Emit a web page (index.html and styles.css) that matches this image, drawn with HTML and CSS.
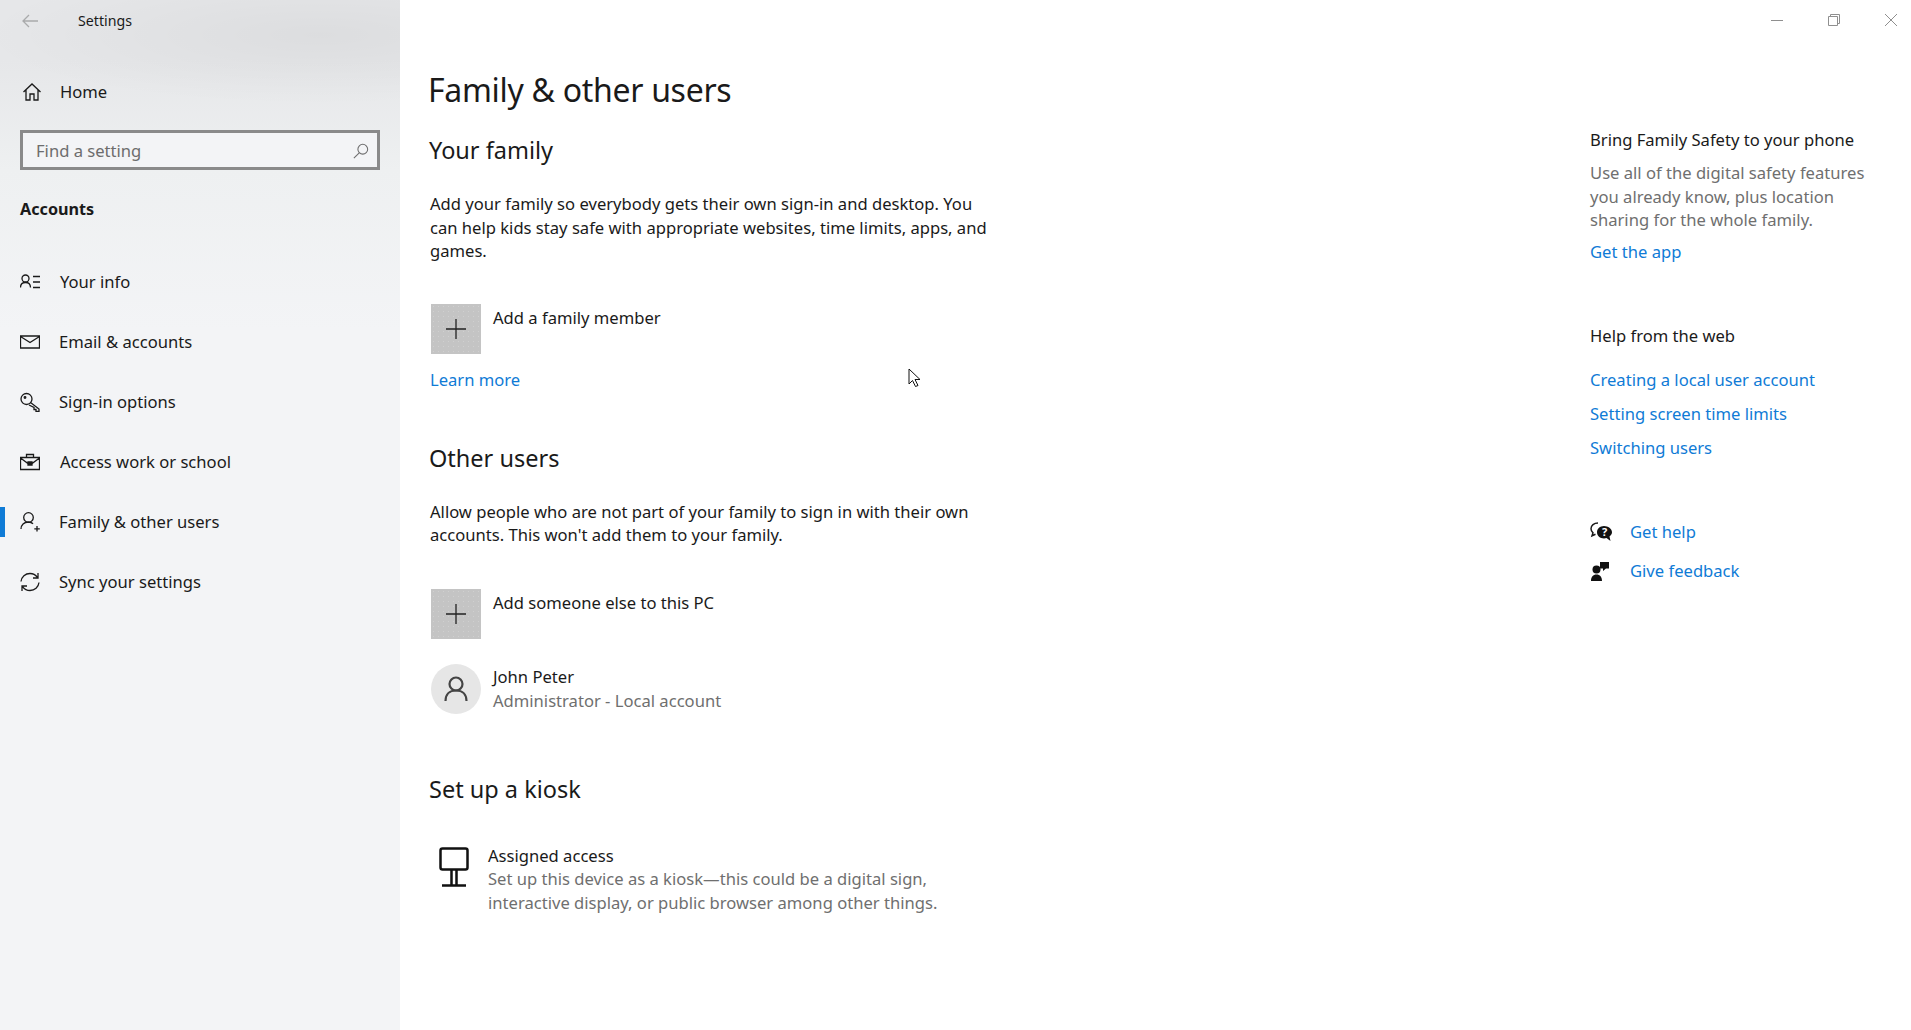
FILE: index.html
```html
<!DOCTYPE html>
<html lang="en">
  <head>
    <meta charset="UTF-8" />
    <title>Settings</title>
    <link rel="stylesheet" href="styles.css">
  </head>
  <body>
    <aside class="sidebar">
      <div class="titlebar">
        <svg class="back-icon" width="16" height="14" viewBox="0 0 16 14"><path d="M7 1 1 7l6 6M1 7h15" /></svg>
        <span>Settings</span>
      </div>

      <a class="nav-item home-item">
        <svg class="nav-icon" width="20" height="20" viewBox="0 0 20 20"><path d="M1.500 10 10 2l8.500 8M4 8v10h4v-6h4v6h4V8" /></svg>
        <span>Home</span>
      </a>

      <div class="search-box">
        <span>Find a setting</span>
        <svg class="search-icon" width="18" height="18" viewBox="0 0 18 18"><circle cx="11" cy="7" r="5.500" /><path d="M7 11 1 17" /></svg>
      </div>

      <h4 class="group-title">Accounts</h4>

      <nav class="nav-list">
        <a class="nav-item">
          <svg class="nav-icon" width="20" height="20" viewBox="0 0 20 20"><circle cx="5.500" cy="6.500" r="3.500" /><path d="M0.500 15.500c0-3 2-5 5-5s5 2 5 5M13 4.500h7M13 10h7M13 15.500h7" /></svg>
          <span>Your info</span>
        </a>
        <a class="nav-item">
          <svg class="nav-icon" width="20" height="20" viewBox="0 0 20 20"><path d="M0.500 4h19v12H0.500zM0.500 4.500l9.500 6 9.500-6" /></svg>
          <span class="shift">Email &amp; accounts</span>
        </a>
        <a class="nav-item">
          <svg class="nav-icon" width="20" height="20" viewBox="0 0 20 20"><circle cx="6.500" cy="7" r="5.500" /><circle cx="5" cy="5.500" r="0.800" /><path d="m10.500 10.500 8.500 6.500v2.500h-3v-2h-2v-2l-5-2.500" /></svg>
          <span class="shift">Sign-in options</span>
        </a>
        <a class="nav-item">
          <svg class="nav-icon" width="20" height="20" viewBox="0 0 20 20"><path d="M0.500 5.500h19v12H0.500zM6.500 5.500v-3h7v3M0.500 6 8 11.500h4L19.500 6M8 10h4v3H8z" /></svg>
          <span>Access work or school</span>
        </a>
        <a class="nav-item active">
          <svg class="nav-icon" width="20" height="20" viewBox="0 0 20 20"><circle cx="8.500" cy="5.500" r="4.800" /><path d="M1 17c0-4.200 3-7 7.500-7 2 0 3.500.7 4.500 1.800M17 14v5.500M14.300 16.800h5.500" /></svg>
          <span class="shift">Family &amp; other users</span>
        </a>
        <a class="nav-item">
          <svg class="nav-icon" width="20" height="20" viewBox="0 0 20 20"><path d="M1 9.500C1.500 5 5.300 1.500 10 1.500c3 0 5.600 1.400 7.300 3.700M19 10.500c-.5 4.500-4.300 8-9 8-3 0-5.600-1.400-7.300-3.700M18 1v5h-5M2 19v-5h5" /></svg>
          <span class="shift">Sync your settings</span>
        </a>
      </nav>
    </aside>

    <main class="page">
      <div class="window-controls">
        <svg width="12" height="12" viewBox="0 0 12 12"><path d="M0 6.500h12" /></svg>
        <svg width="12" height="12" viewBox="0 0 12 12"><path d="M0.500 2.500h9v9h-9zM2.500 2.500v-2h9v9h-2" /></svg>
        <svg width="12" height="12" viewBox="0 0 12 12"><path d="m0 0 12 12M12 0 0 12" /></svg>
      </div>

      <div class="content">
        <h1>Family &amp; other users</h1>

        <h2 class="family-title">Your family</h2>
        <p class="intro">Add your family so everybody gets their own sign-in and desktop. You can help kids stay safe with appropriate websites, time limits, apps, and games.</p>
        <div class="tile-row family-row">
          <div class="tile"><svg width="20" height="20" viewBox="0 0 20 20"><path d="M10 0v20M0 10h20" /></svg></div>
          <span class="tile-label">Add a family member</span>
        </div>
        <a class="link learn-more">Learn more</a>

        <h2 class="other-title">Other users</h2>
        <p class="intro">Allow people who are not part of your family to sign in with their own accounts. This won't add them to your family.</p>
        <div class="tile-row other-row">
          <div class="tile"><svg width="20" height="20" viewBox="0 0 20 20"><path d="M10 0v20M0 10h20" /></svg></div>
          <span class="tile-label">Add someone else to this PC</span>
        </div>
        <div class="tile-row user-row">
          <div class="avatar"><svg width="24" height="26" viewBox="0 0 24 26"><circle cx="12" cy="8" r="6.500" /><path d="M1.500 25c0-6.500 4-10.500 10.500-10.500S22.500 18.500 22.500 25" /></svg></div>
          <div class="user-text">
            <div>John Peter</div>
            <div class="muted">Administrator - Local account</div>
          </div>
        </div>

        <h2 class="kiosk-title">Set up a kiosk</h2>
        <div class="kiosk-row">
          <svg class="kiosk-icon" width="30" height="40" viewBox="0 0 30 40"><rect x="1.500" y="1.500" width="27" height="21" rx="2" /><path d="M12.500 23v15M17.500 23v15M3 38.500h24" /></svg>
          <div class="kiosk-text">
            <div>Assigned access</div>
            <div class="muted">Set up this device as a kiosk—this could be a digital sign, interactive display, or public browser among other things.</div>
          </div>
        </div>
      </div>

      <aside class="side-help">
        <div class="help-title">Bring Family Safety to your phone</div>
        <p class="muted help-text">Use all of the digital safety features you already know, plus location sharing for the whole family.</p>
        <a class="link get-app">Get the app</a>

        <div class="help-title web-title">Help from the web</div>
        <ul class="web-links">
          <li><a class="link">Creating a local user account</a></li>
          <li><a class="link">Setting screen time limits</a></li>
          <li><a class="link">Switching users</a></li>
        </ul>

        <div class="support">
          <a class="support-item">
            <svg width="22" height="20" viewBox="0 0 22 20"><path class="outline" d="M8 1C4 1 1 3.500 1 6.800c0 1.700.8 3 2 4l-1 3 3.500-1.500" /><path class="solid" d="M14 4c-4 0-7 2.800-7 6.300s3 6.200 7 6.200c1 0 1.800-.2 2.500-.4l4 2.900-1-4.500c1.500-1 2.500-2.600 2.500-4.200C22 6.800 18 4 14 4z" /><text x="14.500" y="14" class="mark">?</text></svg>
            <span class="link">Get help</span>
          </a>
          <a class="support-item">
            <svg width="22" height="20" viewBox="0 0 22 20"><circle class="solid" cx="6.500" cy="8.500" r="4" /><path class="solid" d="M1 20c0-4 2-6.500 5.500-6.500S12 16 12 20zM10 1h9v6.500h-3l-3 2.500V7.500h-3z" /></svg>
            <span class="link">Give feedback</span>
          </a>
        </div>
      </aside>

      <svg class="cursor" width="14" height="20" viewBox="0 0 14 20"><path d="M1 1v15l3.500-3.500 3 6 2.500-1-3-6h5z" /></svg>
    </main>
  </body>
</html>
```

FILE: styles.css
```css
* {
  box-sizing: border-box;
}

html,
body {
  height: 100%;
}

body {
  margin: 0;
  display: flex;
  font-family: "Noto Sans", "Open Sans", sans-serif;
  font-size: 16.600px;
  line-height: 24px;
  color: #1a1a1a;
  background: #fff;
  overflow: hidden;
}

svg {
  fill: none;
  stroke: currentColor;
  stroke-width: 1.300;
  flex: none;
}

p,
h1,
h2,
h4,
ul {
  margin: 0;
  padding: 0;
}

.muted {
  color: #6f6f6f;
}

.link {
  color: #0f7bd6;
}

/* sidebar */
.sidebar {
  width: 400px;
  flex: none;
  background:
    radial-gradient(ellipse 340px 70px at 320px 35px, rgba(0, 0, 0, 0.045), transparent),
    linear-gradient(180deg, #e6e7e9 0%, #e6e7e9 60px, #eef0f1 170px, #f3f4f6 330px);
}

.titlebar {
  height: 40px;
  padding: 1px 0 0 22px;
  display: flex;
  align-items: center;
  font-size: 14.200px;
}

.back-icon {
  color: #a9aaab;
  margin-right: 40px;
}

.nav-item {
  height: 60px;
  padding-left: 20px;
  display: flex;
  align-items: center;
  position: relative;
}

.nav-icon {
  margin-right: 20px;
}

.nav-item .shift {
  margin-left: -1px;
}

.home-item {
  margin-top: 22px;
  height: 60px;
  padding-left: 22px;
}

.home-item .nav-icon {
  margin-right: 18px;
}

.nav-item.active::before {
  content: "";
  position: absolute;
  left: 0;
  top: 15px;
  width: 5px;
  height: 30px;
  background: #0f7bd6;
}

.search-box {
  margin: 8px 20px 0;
  height: 40px;
  padding: 1px 8px 0 13px;
  border: 3px solid #8a8a8a;
  background: #f3f4f6;
  display: flex;
  align-items: center;
  justify-content: space-between;
  color: #6d6d6d;
}

.search-icon {
  width: 16px;
  height: 16px;
  stroke-width: 1.200;
}

.group-title {
  margin: 27px 0 0 20px;
  font-size: 16.200px;
  font-weight: 700;
  line-height: 24px;
}

.nav-list {
  margin-top: 31px;
}

/* main area */
.page {
  flex: 1;
  display: flex;
  position: relative;
  justify-content: space-between;
  padding-left: 28px;
}

.window-controls {
  position: absolute;
  top: 14px;
  right: 14px;
  display: flex;
  gap: 45px;
  color: #8f8f8f;
}

.window-controls svg {
  stroke-width: 1;
}

.content {
  width: 570px;
}

h1 {
  margin-top: 66px;
  font-size: 32px;
  letter-spacing: -0.300px;
  line-height: 48px;
  font-weight: 400;
}

h2 {
  margin-left: 1px;
  font-size: 23.500px;
  line-height: 34px;
  font-weight: 400;
}

.family-title {
  margin-top: 19px;
}

.other-title {
  margin-top: 49px;
}

.kiosk-title {
  margin-top: 58px;
}

.intro {
  margin: 25px 0 0 2px;
  line-height: 23.500px;
}

.tile-row {
  margin-left: 3px;
  display: flex;
  gap: 12px;
}

.family-row {
  margin-top: 41px;
}

.other-row {
  margin-top: 42px;
}

.user-row {
  margin-top: 25px;
}

.tile {
  width: 50px;
  height: 50px;
  display: flex;
  align-items: center;
  justify-content: center;
  color: #222;
  background-color: #c4c4c4;
  background-image: radial-gradient(circle, #d0d0d0 0.500px, transparent 1px);
  background-size: 5px 5px;
}

.tile-label {
  line-height: 27px;
}

.avatar {
  width: 50px;
  height: 50px;
  border-radius: 50%;
  background: #e6e6e6;
  color: #444;
  display: flex;
  align-items: center;
  justify-content: center;
}

.avatar svg {
  stroke-width: 2.200;
}

.user-text {
  padding-top: 1px;
}

.learn-more {
  display: block;
  margin: 14px 0 0 2px;
}

.kiosk-row {
  margin: 38px 0 0 11px;
  display: flex;
  gap: 19px;
}

.kiosk-icon {
  margin-top: 3px;
  stroke-width: 2.500;
  color: #111;
}

.kiosk-text {
  width: 470px;
  line-height: 23.500px;
}

.kiosk-text .muted {
  line-height: 23.500px;
}

/* right help column */
.side-help {
  width: 321px;
  padding-top: 128px;
}

.help-text {
  margin-top: 9px;
  width: 290px;
  line-height: 23.500px;
}

.get-app {
  display: block;
  margin-top: 8px;
}

.web-title {
  margin-top: 60px;
}

.web-links {
  list-style: none;
  margin-top: 20px;
}

.web-links li {
  height: 34px;
  line-height: 24px;
}

.support {
  margin-top: 43px;
}

.support-item {
  height: 39px;
  display: flex;
  align-items: center;
  gap: 18px;
}

.outline {
  stroke-width: 1.500;
}

.solid {
  fill: #111;
  stroke: none;
}

.mark {
  fill: #fff;
  stroke: none;
  font-size: 11px;
  font-weight: 700;
  text-anchor: middle;
}

.cursor {
  position: absolute;
  left: 508px;
  top: 368px;
  fill: #fff;
  stroke: #111;
  stroke-width: 1;
}
```
